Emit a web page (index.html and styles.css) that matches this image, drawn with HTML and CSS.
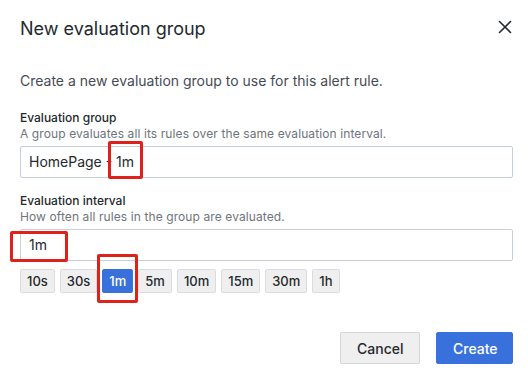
FILE: index.html
```html
<!DOCTYPE html>
<html lang="en">
<head>
  <meta charset="UTF-8" />
  <title>New evaluation group</title>
  <link rel="stylesheet" href="styles.css">
</head>
<body>
  <div class="modal">
    <div class="modal-header">
      <h2 class="modal-title">New evaluation group</h2>
      <button class="close-btn" aria-label="Close">
        <svg width="14" height="14" viewBox="0 0 14 14">
          <path d="M1.5 1.5 L12.5 12.5 M12.5 1.5 L1.5 12.5" stroke="#24292e" stroke-width="1.6" fill="none" stroke-linecap="round"/>
        </svg>
      </button>
    </div>

    <p class="intro">Create a new evaluation group to use for this alert rule.</p>

    <div class="field">
      <label class="field-label">Evaluation group</label>
      <div class="field-help">A group evaluates all its rules over the same evaluation interval.</div>
      <div class="input">HomePage - 1m</div>
    </div>

    <div class="field">
      <label class="field-label">Evaluation interval</label>
      <div class="field-help">How often all rules in the group are evaluated.</div>
      <div class="input">1m</div>
      <div class="presets">
        <button class="preset">10s</button>
        <button class="preset">30s</button>
        <button class="preset active">1m</button>
        <button class="preset">5m</button>
        <button class="preset">10m</button>
        <button class="preset">15m</button>
        <button class="preset">30m</button>
        <button class="preset">1h</button>
      </div>
    </div>

    <div class="modal-footer">
      <button class="btn btn-secondary">Cancel</button>
      <button class="btn btn-primary">Create</button>
    </div>

    <!-- highlight annotations -->
    <div class="mark mark-name"></div>
    <div class="mark mark-interval"></div>
    <div class="mark mark-preset"></div>
  </div>
</body>
</html>
```

FILE: styles.css
```css
body {
  margin: 0;
  background: #fff;
  color: #24292e;
  font-family: Inter, "Noto Sans", sans-serif;
}

.modal {
  position: relative;
  width: 528px;
  height: 376px;
  padding: 0 15px 0 20px;
  box-sizing: border-box;
}

.modal-header {
  display: flex;
  justify-content: space-between;
  align-items: center;
  height: 56px;
}

.modal-title {
  margin: 0;
  font-size: 18px;
  font-weight: 400;
  color: #24292e;
}

.close-btn {
  background: none;
  border: none;
  padding: 0;
  margin-right: 1px;
  margin-top: -3px;
  display: flex;
  cursor: pointer;
}

.intro {
  margin: 15px 0 19px;
  font-size: 14px;
  color: #464c54;
  line-height: 20px;
}

.field {
  margin-bottom: 15px;
}

.field-label {
  display: block;
  font-size: 12px;
  font-weight: 500;
  line-height: 16px;
  color: #24292e;
}

.field-help {
  font-size: 12px;
  letter-spacing: 0.1px;
  line-height: 16px;
  color: #6e747c;
  margin-bottom: 4px;
}

.input {
  height: 32px;
  box-sizing: border-box;
  border: 1px solid #c7d0d9;
  border-radius: 2px;
  padding: 0 8px;
  font-size: 14px;
  line-height: 30px;
  color: #24292e;
}

.presets {
  display: flex;
  gap: 5px;
  margin-top: 8px;
}

.preset {
  height: 24px;
  padding: 0 6px;
  font-family: inherit;
  font-size: 13px;
  font-weight: 500;
  color: #24292e;
  background: #efefef;
  border: 1px solid #dcdcdc;
  border-radius: 2px;
}

.preset.active {
  background: #3871dc;
  border-color: #3871dc;
  color: #fff;
}

.modal-footer {
  display: flex;
  justify-content: flex-end;
  gap: 16px;
  margin-top: 39px;
}

.btn {
  height: 32px;
  padding: 0 16px;
  font-family: inherit;
  font-size: 14px;
  font-weight: 500;
  border-radius: 2px;
}

.btn-secondary {
  background: #efefef;
  border: 1px solid #d6d6d6;
  color: #24292e;
  width: 80px;
}

.btn-primary {
  background: #3871dc;
  border: 1px solid #3871dc;
  color: #fff;
  width: 77px;
}

.mark {
  position: absolute;
  border: 3px solid #e0201b;
  border-radius: 2px;
  box-sizing: border-box;
}

.mark-name {
  left: 108px;
  top: 141px;
  width: 35px;
  height: 38px;
}

.mark-interval {
  left: 10px;
  top: 231px;
  width: 58px;
  height: 31px;
}

.mark-preset {
  left: 97px;
  top: 254px;
  width: 41px;
  height: 49px;
}
```
